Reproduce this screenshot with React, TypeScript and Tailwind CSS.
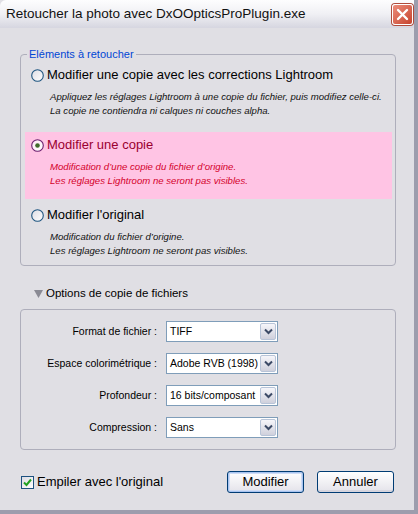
import React from "react";

function Radio({ checked }: { checked?: boolean }) {
  return (
    <svg width="13" height="13" viewBox="0 0 13 13" className="shrink-0">
      <defs>
        <linearGradient id={checked ? "rg-on" : "rg-off"} x1="0" y1="0" x2="1" y2="1">
          <stop offset="0" stopColor={checked ? "#fde8f4" : "#dcdce4"} />
          <stop offset="1" stopColor="#ffffff" />
        </linearGradient>
      </defs>
      <circle
        cx="6.5"
        cy="6.5"
        r="5.8"
        fill={`url(#${checked ? "rg-on" : "rg-off"})`}
        stroke={checked ? "#6a1f6e" : "#1e5580"}
        strokeWidth="1.1"
      />
      {checked && <circle cx="6.5" cy="6.5" r="2.3" fill="#3f6a2a" />}
    </svg>
  );
}

function Option({
  title,
  lines,
  selected,
  last,
}: {
  title: string;
  lines: string[];
  selected?: boolean;
  last?: boolean;
}) {
  return (
    <div
      className={`ml-[4px] mr-[3px] pl-[6px] pt-[5px] ${last ? "pb-[7px]" : "pb-[11px]"} ${
        selected ? "bg-[#ffc4e4]" : ""
      }`}
    >
      <div className="flex h-[16px] items-center gap-[3px]">
        <Radio checked={selected} />
        <span className={`text-[13px] leading-[16px] ${selected ? "text-[#9a0030]" : "text-black"}`}>
          {title}
        </span>
      </div>
      <div
        className={`ml-[19px] mt-[7px] whitespace-nowrap text-[9.6px] italic leading-[14px] ${
          selected ? "text-[#d4002a]" : "text-[#111]"
        }`}
      >
        {lines.map((l) => (
          <div key={l}>{l}</div>
        ))}
      </div>
    </div>
  );
}

function Select({ value }: { value: string }) {
  return (
    <div className="flex h-[21px] w-[112px] items-stretch border border-[#7f9db9] bg-white">
      <div className="flex-1 overflow-hidden whitespace-nowrap pl-[3px] text-[10.5px] leading-[19px] text-black">
        {value}
      </div>
      <div className="m-[1px] flex w-[16px] items-center justify-center rounded-[2px] border border-[#b8c4d8] bg-gradient-to-b from-[#f6f6fa] to-[#cfd0dc]">
        <svg width="9" height="7" viewBox="0 0 9 7">
          <path d="M1 1.5 L4.5 5 L8 1.5" fill="none" stroke="#3c4a66" strokeWidth="2" />
        </svg>
      </div>
    </div>
  );
}

function Row({ label, value }: { label: string; value: string }) {
  return (
    <div className="flex h-[21px] items-center">
      <div className="w-[136px] text-right text-[10.5px] text-black">{label}</div>
      <div className="ml-[9px]">
        <Select value={value} />
      </div>
    </div>
  );
}

function Button({ children, primary }: { children: React.ReactNode; primary?: boolean }) {
  return (
    <div
      className={`flex h-[22px] w-[77px] items-center justify-center rounded-[3px] border border-[#003c74] bg-gradient-to-b from-white to-[#e4e3ea] text-[13px] text-black ${
        primary ? "shadow-[inset_0_0_0_1px_#a8c4f0,inset_0_0_0_2px_#cfdcf5]" : "shadow-[inset_0_-2px_0_#d6d5de]"
      }`}
    >
      {children}
    </div>
  );
}

export default function App() {
  return (
    <div className="flex h-[514px] w-[418px] flex-col border-b-[4px] border-r-[4px] border-[#9d9dad] bg-[#e0dfe4] [font-family:'Liberation_Sans',Arial,sans-serif]">
      <div className="flex h-[28px] shrink-0 items-center justify-between rounded-tl-[6px] bg-gradient-to-b from-[#fdfdfe] via-[#f0f0f4] to-[#d6d6e0] pl-[6px] pr-[1px]">
        <span className="text-[13.5px] text-[#111]">Retoucher la photo avec DxOOpticsProPlugin.exe</span>
        <div className="flex h-[21px] w-[21px] items-center justify-center rounded-[3px] border border-white bg-gradient-to-br from-[#ec8d7c] to-[#c6422c] shadow-[0_0_0_1px_#b04c3c]">
          <svg width="13" height="13" viewBox="0 0 13 13">
            <path d="M2 2 L11 11 M11 2 L2 11" stroke="white" strokeWidth="2.4" strokeLinecap="round" />
          </svg>
        </div>
      </div>

      <div className="flex flex-1 flex-col pl-[20px] pr-[18px] pt-[19px]">
        <fieldset className="m-0 rounded-[4px] border border-[#aeaebb] p-0">
          <legend className="ml-[6px] px-[2px] text-[11px] leading-[14px] text-[#0046d5]">
            Eléments à retoucher
          </legend>
          <div className="mt-[1px] flex flex-col gap-[3px]">
            <Option
              title="Modifier une copie avec les corrections Lightroom"
              lines={[
                "Appliquez les réglages Lightroom à une copie du fichier, puis modifiez celle-ci.",
                "La copie ne contiendra ni calques ni couches alpha.",
              ]}
            />
            <Option
              selected
              title="Modifier une copie"
              lines={["Modification d’une copie du fichier d’origine.", "Les réglages Lightroom ne seront pas visibles."]}
            />
            <Option
              last
              title="Modifier l'original"
              lines={["Modification du fichier d’origine.", "Les réglages Lightroom ne seront pas visibles."]}
            />
          </div>
        </fieldset>

        <div className="mt-[20px] flex h-[16px] items-center pl-[14px]">
          <svg width="9" height="8" viewBox="0 0 9 8" className="mr-[3px]">
            <path d="M0 0 H9 L4.5 8 Z" fill="#8a8a94" />
          </svg>
          <span className="text-[11.5px] text-black">Options de copie de fichiers</span>
        </div>

        <div className="mt-[7px] flex flex-col gap-[11px] rounded-[4px] border border-[#aeaebb] pb-[11px] pt-[11px]">
          <Row label="Format de fichier :" value="TIFF" />
          <Row label="Espace colorimétrique :" value="Adobe RVB (1998)" />
          <Row label="Profondeur :" value="16 bits/composant" />
          <Row label="Compression :" value="Sans" />
        </div>

        <div className="mt-[21px] flex items-center justify-between pr-[2px]">
          <div className="flex items-center gap-[3px] pl-[1px]">
            <div className="flex h-[13px] w-[13px] items-center justify-center border border-[#1c5180] bg-gradient-to-br from-[#dcdce4] to-white">
              <svg width="9" height="9" viewBox="0 0 9 9">
                <path d="M1 4.5 L3.5 7 L8 1.5" fill="none" stroke="#21a121" strokeWidth="2" />
              </svg>
            </div>
            <span className="text-[13px] text-black">Empiler avec l'original</span>
          </div>
          <div className="flex gap-[13px]">
            <Button primary>Modifier</Button>
            <Button>Annuler</Button>
          </div>
        </div>
      </div>
    </div>
  );
}
